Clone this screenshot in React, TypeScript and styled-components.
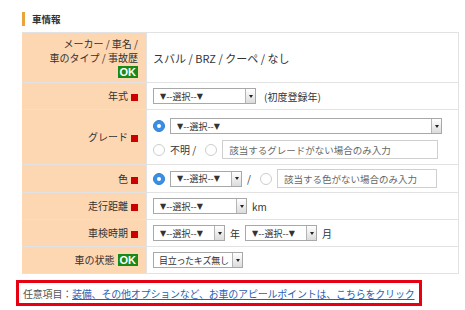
import styled, { createGlobalStyle } from 'styled-components';

const GlobalStyle = createGlobalStyle`
  body {
    margin: 0;
    background: #fff;
    color: #333;
    font-family: "Noto Sans CJK JP", "Noto Sans", sans-serif;
  }
`;

const Page = styled.div`
  padding: 12px 0 0 16px;
  width: 449px;
`;

const SectionTitle = styled.div`
  margin-left: 6px;
  border-left: 3px solid #e9a53d;
  padding-left: 7px;
  height: 14px;
  line-height: 14px;
  font-size: 9.5px;
  font-weight: bold;
  color: #333;
`;

const FormTable = styled.table`
  margin: 6px 0 0 6px;
  width: 437px;
  border-collapse: collapse;
`;

const Row = styled.tr<{ $h: number }>`
  height: ${(p) => p.$h}px;
`;

const Label = styled.th`
  width: 113px;
  background: #fdd6b2;
  border: 1px solid #e2e2e2;
  border-left-color: #fdd6b2;
  text-align: right;
  padding: 0 8px 0 2px;
  font-size: 10px;
  font-weight: normal;
  line-height: 14px;
  color: #333;
  vertical-align: middle;
`;

const Value = styled.td`
  border: 1px solid #e2e2e2;
  padding: 0 0 0 6px;
  font-size: 11px;
  color: #333;
  vertical-align: middle;
`;

const Required = styled.span`
  display: inline-block;
  width: 7px;
  height: 7px;
  background: #cc0000;
  margin-left: 3px;
  vertical-align: -1px;
`;

const OkBadge = styled.span`
  display: inline-block;
  background: #178a17;
  color: #fff;
  font-family: "Liberation Sans", Arial, sans-serif;
  font-weight: bold;
  font-size: 11px;
  line-height: 12px;
  padding: 0 2px;
  margin-left: 3px;
`;

const Line = styled.div`
  display: flex;
  align-items: center;
  gap: 5px;
`;

const Stack = styled.div`
  display: flex;
  flex-direction: column;
  gap: 6px;
  padding: 5px 0 2px;
`;

const SelectBox = styled.span<{ $w: number }>`
  display: inline-flex;
  align-items: stretch;
  justify-content: space-between;
  box-sizing: border-box;
  width: ${(p) => p.$w}px;
  height: 16px;
  border: 1px solid #a8a8a8;
  background: #fff;
  font-size: 9px;
  color: #333;
`;

const SelectText = styled.span<{ $tight?: boolean }>`
  display: flex;
  align-items: center;
  padding-left: ${(p) => (p.$tight ? 5 : 6)}px;
  letter-spacing: ${(p) => (p.$tight ? '-0.3px' : '0')};
  white-space: nowrap;
  overflow: hidden;
`;

const Tri = styled.span`
  font-family: "DejaVu Sans", sans-serif;
  font-size: 8px;
`;

const SelectArrow = styled.span`
  flex: none;
  width: 9px;
  border-left: 1px solid #b5b5b5;
  background: linear-gradient(#ffffff, #dcdcdc);
  display: flex;
  align-items: center;
  justify-content: center;
  &::after {
    content: '';
    border-left: 2px solid transparent;
    border-right: 2px solid transparent;
    border-top: 3px solid #222;
  }
`;

const Radio = styled.span<{ $checked?: boolean; $gap?: number }>`
  flex: none;
  box-sizing: border-box;
  width: 12px;
  height: 12px;
  margin-left: ${(p) => p.$gap ?? 0}px;
  border-radius: 50%;
  display: inline-flex;
  align-items: center;
  justify-content: center;
  background: ${(p) => (p.$checked ? '#3a8ee6' : '#fff')};
  border: 1px solid ${(p) => (p.$checked ? '#2f7fd6' : '#cdcdcd')};
  &::after {
    content: '';
    width: 4px;
    height: 4px;
    border-radius: 50%;
    background: ${(p) => (p.$checked ? '#fff' : 'transparent')};
  }
`;

const TextField = styled.input<{ $w: number }>`
  box-sizing: border-box;
  width: ${(p) => p.$w}px;
  height: 19px;
  border: 1px solid #cfcfcf;
  padding: 0 6px;
  font-family: inherit;
  font-size: 9.5px;
  color: #555;
  &::placeholder {
    color: #666;
  }
`;

const Note = styled.span<{ $gap?: number }>`
  margin-left: ${(p) => p.$gap ?? 0}px;
  font-size: 10px;
  color: #333;
`;

const Appeal = styled.div`
  box-sizing: border-box;
  width: 406px;
  margin-top: 6px;
  border: 3px solid #e60012;
  height: 26px;
  padding-left: 4px;
  display: flex;
  align-items: center;
  font-size: 10px;
  letter-spacing: -0.2px;
  color: #555;
  white-space: nowrap;
`;

const AppealLink = styled.a`
  color: #2b5fb3;
  text-decoration: underline;
`;

function Select({ w, text }: { w: number; text?: string }) {
  return (
    <SelectBox $w={w}>
      <SelectText $tight={!!text}>
        {text ?? (
          <>
            <Tri>▼</Tri>--選択--<Tri>▼</Tri>
          </>
        )}
      </SelectText>
      <SelectArrow />
    </SelectBox>
  );
}

export default function App() {
  return (
    <Page>
      <GlobalStyle />
      <SectionTitle>車情報</SectionTitle>
      <FormTable>
        <tbody>
          <Row $h={50}>
            <Label>
              メーカー / 車名 /<br />
              車のタイプ / 事故歴<br />
              <OkBadge>OK</OkBadge>
            </Label>
            <Value>スバル / BRZ / クーペ / なし</Value>
          </Row>
          <Row $h={27}>
            <Label>年式<Required /></Label>
            <Value>
              <Line>
                <Select w={103} />
                <Note $gap={3}>(初度登録年)</Note>
              </Line>
            </Value>
          </Row>
          <Row $h={55}>
            <Label>グレード<Required /></Label>
            <Value>
              <Stack>
                <Line>
                  <Radio $checked />
                  <Select w={272} />
                </Line>
                <Line>
                  <Radio />
                  <Note>不明 /</Note>
                  <Radio $gap={4} />
                  <TextField $w={216} placeholder="該当するグレードがない場合のみ入力" />
                </Line>
              </Stack>
            </Value>
          </Row>
          <Row $h={28}>
            <Label>色<Required /></Label>
            <Value>
              <Line>
                <Radio $checked />
                <Select w={72} />
                <Note>/</Note>
                <Radio $gap={4} />
                <TextField $w={160} placeholder="該当する色がない場合のみ入力" />
              </Line>
            </Value>
          </Row>
          <Row $h={27}>
            <Label>走行距離<Required /></Label>
            <Value>
              <Line>
                <Select w={94} />
                <Note>km</Note>
              </Line>
            </Value>
          </Row>
          <Row $h={27}>
            <Label>車検時期<Required /></Label>
            <Value>
              <Line>
                <Select w={72} />
                <Note>年</Note>
                <Select w={72} />
                <Note>月</Note>
              </Line>
            </Value>
          </Row>
          <Row $h={27}>
            <Label>車の状態<OkBadge>OK</OkBadge></Label>
            <Value>
              <Line>
                <Select w={90} text="目立ったキズ無し" />
              </Line>
            </Value>
          </Row>
        </tbody>
      </FormTable>
      <Appeal>
        任意項目：
        <AppealLink href="#">装備、その他オプションなど、お車のアピールポイントは、こちらをクリック</AppealLink>
      </Appeal>
    </Page>
  );
}
